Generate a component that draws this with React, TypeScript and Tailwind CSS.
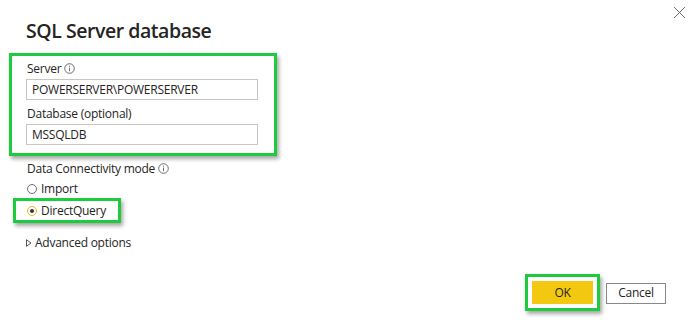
import React from "react";

function InfoIcon() {
  return (
    <svg width="11" height="11" viewBox="0 0 11 11" className="inline-block ml-[3px] align-[-1px]">
      <circle cx="5.5" cy="5.5" r="4.8" fill="none" stroke="#5f5f5f" strokeWidth="0.9" />
      <line x1="5.5" y1="4.6" x2="5.5" y2="8.2" stroke="#5f5f5f" strokeWidth="0.9" />
      <circle cx="5.5" cy="3.1" r="0.6" fill="#5f5f5f" />
    </svg>
  );
}

export default function App() {
  return (
    <div
      className="relative w-[693px] h-[329px] bg-white flex flex-col text-[#252423] overflow-hidden tracking-[-0.25px]"
      style={{ fontFamily: '"Open Sans", "Noto Sans", sans-serif' }}
    >
      <button className="absolute right-[7px] top-[5px] w-[14px] h-[14px] flex items-center justify-center">
        <svg width="13" height="13" viewBox="0 0 13 13">
          <line x1="1" y1="1" x2="12" y2="12" stroke="#6b6b6b" strokeWidth="1" />
          <line x1="12" y1="1" x2="1" y2="12" stroke="#6b6b6b" strokeWidth="1" />
        </svg>
      </button>

      <h1 className="pl-[26px] pt-[18px] text-[19.5px] leading-[26px] font-semibold tracking-[-0.45px] text-[#252423]">
        SQL Server database
      </h1>

      <div className="ml-[9px] mt-[9px] w-[268px] border-[3px] border-[#1ccb3e] shadow-[2px_3px_4px_rgba(0,0,0,0.35)] pl-[14px] pr-[16px] pt-[5px] pb-[8px]">
        <div className="text-[12px] leading-[16px] pl-[1px]">
          Server
          <InfoIcon />
        </div>
        <div className="mt-[2px] h-[21px] border border-[#c8c6c4] flex items-center pl-[5px] text-[12px]">
          POWERSERVER\POWERSERVER
        </div>
        <div className="mt-[6px] text-[12px] leading-[16px] pl-[1px]">Database (optional)</div>
        <div className="mt-[2px] h-[21px] border border-[#c8c6c4] flex items-center pl-[5px] text-[12px]">
          MSSQLDB
        </div>
      </div>

      <div className="mt-[5px] pl-[27px] text-[12px] leading-[16px]">
        Data Connectivity mode
        <InfoIcon />
      </div>

      <div className="mt-[4px] pl-[27px] flex items-center h-[16px] text-[12px]">
        <span className="w-[10px] h-[10px] rounded-full border border-[#6e6e6e] bg-white" />
        <span className="ml-[4px]">Import</span>
      </div>

      <div className="ml-[13px] mt-[1px] w-[108px] h-[25px] border-[3px] border-[#1ccb3e] shadow-[2px_3px_4px_rgba(0,0,0,0.35)] flex items-center pl-[11px] text-[12px]">
        <span className="w-[10px] h-[10px] rounded-full border-[1.5px] border-[#e8b90e] bg-white flex items-center justify-center">
          <span className="w-[4px] h-[4px] rounded-full bg-[#333]" />
        </span>
        <span className="ml-[4px]">DirectQuery</span>
      </div>

      <div className="mt-[12px] pl-[26px] flex items-center text-[12px] leading-[16px]">
        <svg width="6" height="8" viewBox="0 0 6 8">
          <path d="M0.5 0.7 L5 4 L0.5 7.3 Z" fill="none" stroke="#444" strokeWidth="0.9" />
        </svg>
        <span className="ml-[3px]">Advanced options</span>
      </div>

      <div className="mt-auto mb-[18px] pr-[27px] flex items-center justify-end gap-[6px]">
        <div className="border-[3px] border-[#1ccb3e] shadow-[2px_3px_4px_rgba(0,0,0,0.35)] p-[4px]">
          <button className="w-[61px] h-[23px] bg-[#f2c811] text-[12px] text-[#252423] flex items-center justify-center">
            OK
          </button>
        </div>
        <button className="w-[60px] h-[21px] border border-[#8a8886] bg-white text-[12px] text-[#252423] flex items-center justify-center mb-[-1px]">
          Cancel
        </button>
      </div>
    </div>
  );
}
